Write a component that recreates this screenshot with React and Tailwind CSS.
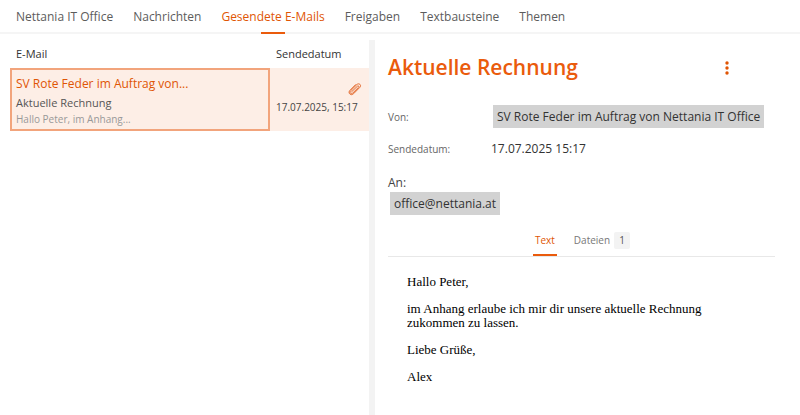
import { useState } from 'react'

const navItems = [
  'Nettania IT Office',
  'Nachrichten',
  'Gesendete E-Mails',
  'Freigaben',
  'Textbausteine',
  'Themen',
]

function MainNav({ active, onSelect }) {
  return (
    <nav className="flex h-[34px] shrink-0 gap-5 border-b-2 border-[#f5f5f5] px-4 text-[12px]">
      {navItems.map((item) => (
        <a
          key={item}
          href="#"
          onClick={() => onSelect(item)}
          className={`relative flex h-[34px] items-center whitespace-nowrap ${item === active ? 'text-[#e05504]' : 'text-[#5c5c5c]'}`}
        >
          {item}
          {item === active && (
            <span className="absolute bottom-0 left-1/2 h-[2px] w-6 -translate-x-1/2 bg-[#ea5b0c]" />
          )}
        </a>
      ))}
    </nav>
  )
}

function ClipIcon() {
  return (
    <svg viewBox="0 0 14 14" fill="none" stroke="#e3672a" strokeWidth="1" strokeLinecap="round" strokeLinejoin="round" className="h-[14px] w-[14px]">
      <path d="M3.600 9.800 9.400 4.200c1-.9 2 .1 1.100 1.100L4.900 10.900c-1.900 1.800-4-.2-2.200-2.200L8.800 2.600c2.100-2 5.100.4 3.100 2.700L5.600 11.700c-2.600 2.600-6-.5-3.800-3.200L7.700 2.600" />
    </svg>
  )
}

function MailList() {
  return (
    <section className="pl-[10px] pt-[6px]">
      <table className="w-full table-fixed border-collapse text-left">
        <thead>
          <tr className="h-7 text-[11px] text-[#333]">
            <th className="pl-[6px] font-normal">E-Mail</th>
            <th className="w-[99px] pl-[6px] font-normal">Sendedatum</th>
          </tr>
        </thead>
        <tbody>
          <tr className="bg-[#fdeee6]">
            <td className="p-0">
              <div className="h-[63px] border-2 border-[#f2a47c] px-1 pt-[3px]">
                <p className="truncate text-[12px] leading-[21px] text-[#e05504]">SV Rote Feder im Auftrag von...</p>
                <p className="text-[11px] leading-[17px] text-[#555]">Aktuelle Rechnung</p>
                <p className="text-[10px] leading-[17px] text-[#999]">Hallo Peter, im Anhang...</p>
              </div>
            </td>
            <td className="whitespace-nowrap py-0 pl-[6px] pr-[7px] text-[10px] text-[#444]">
              <div className="flex justify-end">
                <ClipIcon />
              </div>
              <p className="leading-[22px]">17.07.2025, 15:17</p>
            </td>
          </tr>
        </tbody>
      </table>
    </section>
  )
}

function Tabs({ tab, onChange }) {
  const base = 'flex h-[29px] items-center gap-1 border-b-2'
  const on = 'border-[#ea5b0c] text-[#e05504]'
  const off = 'border-transparent text-[#777]'
  return (
    <div role="tablist" className="mt-3 flex justify-center gap-[17px] border-b border-[#e8e8e8] text-[10px]">
      <button
        role="tab"
        aria-selected={tab === 'text'}
        onClick={() => onChange('text')}
        className={`${base} px-[2px] ${tab === 'text' ? on : off}`}
      >
        Text
      </button>
      <button
        role="tab"
        aria-selected={tab === 'files'}
        onClick={() => onChange('files')}
        className={`${base} ${tab === 'files' ? on : off}`}
      >
        Dateien
        <span className="flex h-[17px] w-4 items-center justify-center rounded-xs bg-[#f3f3f3] text-[#555]">1</span>
      </button>
    </div>
  )
}

function MailDetail() {
  const [tab, setTab] = useState('text')

  return (
    <section className="pl-[13px] pr-[25px] pt-[18px] text-[12px] text-[#333]">
      <header className="flex h-8 items-center justify-between pr-[41px]">
        <h1 className="text-[21px] font-semibold text-[#ea5b0c]">Aktuelle Rechnung</h1>
        <button aria-label="Mehr" className="flex h-5 w-[14px] items-center justify-center">
          <svg viewBox="0 0 4 14" fill="#e05504" className="h-[14px] w-1">
            <circle cx="2" cy="2" r="1.700" />
            <circle cx="2" cy="7" r="1.700" />
            <circle cx="2" cy="12" r="1.700" />
          </svg>
        </button>
      </header>

      <dl className="mt-[21px] grid grid-cols-[103px_1fr] items-center whitespace-nowrap">
        <dt className="text-[10px] text-[#666]">Von:</dt>
        <dd className="flex h-[25px] pl-[2px]">
          <span className="h-[23px] bg-[#d2d2d2] px-1 leading-[23px]">
            SV Rote Feder im Auftrag von Nettania IT Office
          </span>
        </dd>
        <dt className="text-[10px] text-[#666]">Sendedatum:</dt>
        <dd className="leading-[38px]">17.07.2025 15:17</dd>
      </dl>

      <p className="mt-[6px] leading-[18px] text-[#444]">An:</p>
      <p className="flex pl-[2px] leading-[23px]">
        <span className="bg-[#d2d2d2] px-1">office@nettania.at</span>
      </p>

      <Tabs tab={tab} onChange={setTab} />

      {tab === 'text' && (
        <div className="space-y-[13px] px-[19px] pt-[18px] font-['Liberation_Serif',serif] text-[13px] leading-[14px] text-black">
          <p>Hallo Peter,</p>
          <p className="max-w-[320px]">im Anhang erlaube ich mir dir unsere aktuelle Rechnung zukommen zu lassen.</p>
          <p>Liebe Grüße,</p>
          <p>Alex</p>
        </div>
      )}
    </section>
  )
}

export default function App() {
  const [active, setActive] = useState('Gesendete E-Mails')

  return (
    <div className="flex min-h-screen flex-col bg-white font-['Open_Sans','Noto_Sans',sans-serif]">
      <MainNav active={active} onSelect={setActive} />
      <main className="grid grow grid-cols-[minmax(0,369fr)_6px_minmax(0,425fr)]">
        <MailList />
        <div className="mt-[6px] bg-[#f3f3f3]" />
        <MailDetail />
      </main>
    </div>
  )
}
